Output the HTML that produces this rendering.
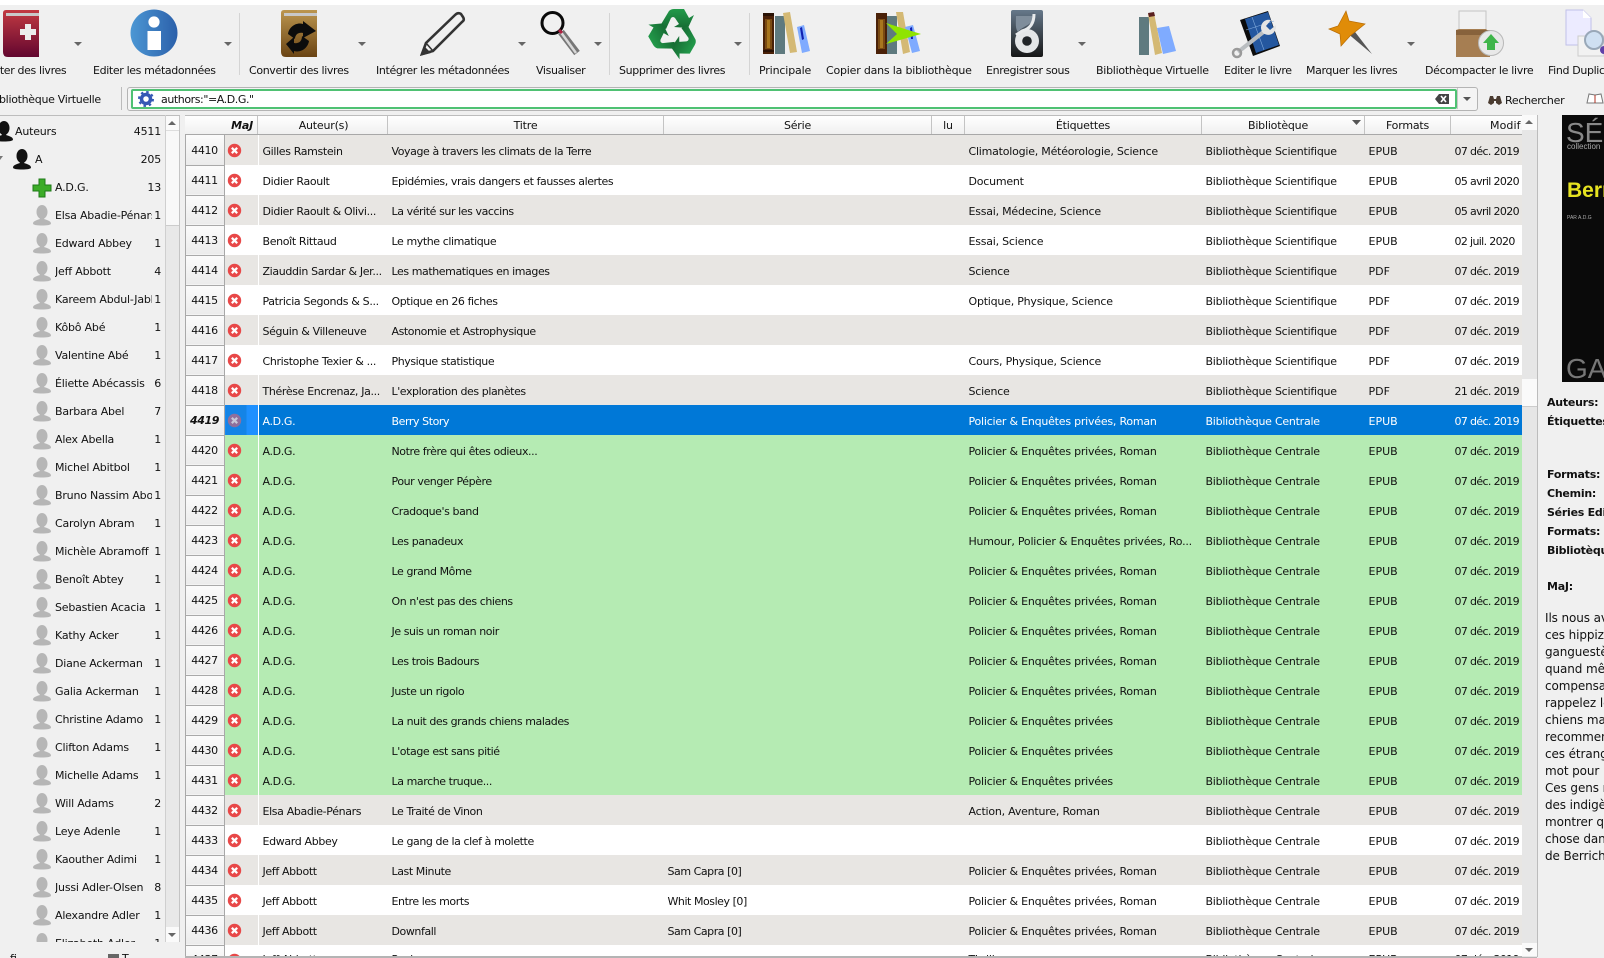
<!DOCTYPE html>
<html><head><meta charset="utf-8"><style>
html,body{margin:0;padding:0;width:1604px;height:958px;overflow:hidden;background:#f0f0f0}
body{font:11px/14px "DejaVu Sans","Liberation Sans",sans-serif;color:#111;position:relative}
.abs,.l,.sb,.dsc div,.pl{position:absolute;white-space:nowrap}
#top{position:absolute;left:0;top:0;width:1604px;height:5px;background:#fff}
.l{top:64px;color:#111;letter-spacing:-.36px}
#tb{position:absolute;left:0;top:0}
#sr{left:127px;top:87px;width:1349px;height:22px;border:1px solid #b4b4b4;border-radius:3px;background:#f4f4f4}
#in{left:131px;top:89px;width:1322px;height:16px;border:2px solid #4fc173;border-radius:2px;background:#fff}
#side{left:0;top:116px;width:165px;height:826px;overflow:hidden;letter-spacing:-.2px}
.sb{left:0;width:165px;height:28px;line-height:29px}
.sb b{font-weight:normal;position:absolute;right:4px}
.sb span{position:absolute;left:55px;width:97px;overflow:hidden}
.sb svg{position:absolute;left:32px;top:4px}
#hd{left:185px;top:115px;width:1337px;height:20px;border-top:1px solid #bdbdbd;border-bottom:1px solid #a8a8a8;box-sizing:border-box;background:linear-gradient(#fff,#f0f0f0);letter-spacing:-.2px}
.h{position:absolute;top:0;height:18px;line-height:20px;text-align:center;border-right:1px solid #c4c4c4;box-sizing:border-box;overflow:hidden}
#wrap{left:185px;top:135px;width:1337px;height:821px;overflow:hidden;background:#fff}
table{border-collapse:collapse;table-layout:fixed;width:1337px}
td,th{height:30px;padding:3px 0 0 3px;overflow:hidden;white-space:nowrap;font-weight:normal;text-align:left;box-sizing:border-box}
th{padding:2px 1px 0 0;text-align:center;background:linear-gradient(#fbfbfb,#ebebeb);border:1px solid #a9a9a9;border-top:0;color:#111;letter-spacing:-.4px}
td.m{padding:0 0 0 2px}
td:nth-child(3){letter-spacing:-.35px;padding-left:4px}
td:nth-child(4){letter-spacing:-.42px}
td:nth-child(5){letter-spacing:-.45px}
td:nth-child(7){letter-spacing:-.22px}
td:nth-child(8){letter-spacing:-.25px}
td.d{letter-spacing:-.65px}
.z td,.z th{padding-top:0}
.x{display:block;width:15px;height:15px}
.a td{background:#e8e6e3}.w td{background:#fff}.g td{background:#b5ebb3}
.s td{background:#0078d7;color:#fff}
.s td.m{background:linear-gradient(90deg,#1484e6 0,#1484e6 21px,#1e90ff 21px)}
.s th{font-weight:bold;font-style:italic}
.st{position:absolute;left:1522px;width:15px}
.dsc{position:absolute;left:1545px;top:1px;letter-spacing:-.1px;font-size:12px}
.pl{left:1547px;font-weight:bold;letter-spacing:-.25px}
</style></head><body>
<div id="top"></div>

<svg id="tb" width="1604" height="112" viewBox="0 0 1604 112">
<defs>
<linearGradient id="gr" x1="0" y1="0" x2="0" y2="1"><stop offset="0" stop-color="#c23a42"/><stop offset="1" stop-color="#62062f"/></linearGradient>
<linearGradient id="gb" x1="0" y1="0" x2="0" y2="1"><stop offset="0" stop-color="#bc964f"/><stop offset="1" stop-color="#6a4414"/></linearGradient>
<linearGradient id="gi" x1="0" y1="0" x2="1" y2="0"><stop offset="0" stop-color="#4c97d4"/><stop offset="1" stop-color="#2b60aa"/></linearGradient>
<linearGradient id="gg" x1="0" y1="0" x2="0" y2="1"><stop offset="0" stop-color="#229a4a"/><stop offset="1" stop-color="#166a33"/></linearGradient>
<linearGradient id="gd" x1="0" y1="0" x2="0" y2="1"><stop offset="0" stop-color="#66788a"/><stop offset="1" stop-color="#161616"/></linearGradient>
<g id="pc"><path d="M-14-7-5-22Q-3-24 0-24H10L15-15 20-18 14-5 0-6 5-9 1-15Q-1-17-3-15L-8-4Z"/></g>
</defs>
<!-- red book -->
<path d="M6 10H39V57H8Q3 57 3 52V13Q3 10 6 10Z" fill="url(#gr)"/><path d="M6 13H39V16H6Z" fill="#c9c9c9"/><path d="M25 24h6v5h5v6h-5v5h-6v-5h-5v-6h5z" fill="#ececec"/>
<circle cx="154" cy="33" r="23.5" fill="url(#gi)"/><circle cx="154" cy="22" r="5.6" fill="#fff"/><rect x="147.500" y="31" width="13.500" height="19" fill="#fff"/>
<!-- convert -->
<path d="M284 10H317V57H286Q281 57 281 52V13Q281 10 284 10Z" fill="url(#gb)"/><path d="M284 13H317V16H284Z" fill="#c8c8c8"/>
<path d="M288 34C289 27 296 22 303 24V21L316 31 303 38V33C298 32 295 35 295 39Z" fill="#0c0c0c"/><path d="M309 41C308 48 301 53 294 51V54L286 44 294 37V43C299 44 302 41 302 36Z" fill="#0c0c0c"/>
<!-- pencil -->
<path d="M422 54 426 43 455 15Q458 12 461 14L463 17Q465 20 462 22L433 51Z" fill="none" stroke="#333" stroke-width="2.600"/><path d="M420 56 424 46 431 53Z" fill="#333"/><path d="M426 43 433 51" stroke="#333" stroke-width="1.500"/>
<!-- magnifier -->
<path d="M561 32 577 53" stroke="#777" stroke-width="7"/><path d="M560 31 576 53" stroke="#d8d8d8" stroke-width="2.500"/><circle cx="552.500" cy="23" r="10.500" fill="none" stroke="#0a0a0a" stroke-width="3"/><path d="M559 30l3 3" stroke="#b02040" stroke-width="3"/>
<!-- recycle -->
<g fill="url(#gg)" transform="translate(674 33)"><use href="#pc"/><use href="#pc" transform="rotate(120)"/><use href="#pc" transform="rotate(240)"/></g>
<!-- separators -->
<g stroke="#d4d4d4"><path d="M239.500 13V75M609.500 13V75M749.500 13V75"/></g><path d="M121.500 87V110" stroke="#bbb"/>
<!-- arrows -->
<g fill="#666"><path d="M74 42h8l-4 4zM224 42h8l-4 4zM358 42h8l-4 4zM518 42h8l-4 4zM594 42h8l-4 4zM734 42h8l-4 4zM1078 42h8l-4 4zM1407 42h8l-4 4z"/></g>
<!-- books 1 -->
<rect x="763" y="13" width="11" height="41" fill="#4a2108"/><rect x="765" y="19" width="7" height="30" fill="#7a4a12"/><path d="M767 20h3v28h-3z" fill="#a8761e"/><rect x="763" y="13" width="11" height="3" fill="#2a1205"/><rect x="763" y="50" width="11" height="2" fill="#2a1205"/>
<rect x="775" y="16" width="10" height="38" fill="#5f7a7f"/><path d="M783 13 790 12 797 52 790 53Z" fill="#d4b974"/><path d="M797 27 804 25 810 51 802 53Z" fill="#7fabff"/><path d="M800 28 802 27 804 39 802 40Z" fill="#1020b0"/>
<!-- copy -->
<rect x="876" y="13" width="11" height="41" fill="#4a2108"/><rect x="878" y="19" width="7" height="30" fill="#7a4a12"/><path d="M880 20h3v28h-3z" fill="#a8761e"/>
<rect x="887" y="16" width="10" height="38" fill="#5f7a7f"/><path d="M896 12 903 12 910 52 903 54Z" fill="#d4b974"/><path d="M905 27 913 25 920 51 912 53Z" fill="#7fabff"/><path d="M910 28 912 27 913 39 911 39Z" fill="#1020b0"/>
<path d="M886 23 921 34 886 44 897 34Z" fill="#8fe400"/>
<!-- disk -->
<rect x="1011" y="10" width="32" height="47" rx="2" fill="url(#gd)"/><path d="M1016 16H1034C1034 25 1022 26 1018 32 1015 28 1016 24 1016 16Z" fill="#7f8d9b"/><circle cx="1027" cy="41" r="12" fill="#e4e6e8"/><path d="M1034 14Q1034 28 1022 31L1016 35" stroke="#e8eaec" stroke-width="3" fill="none"/><circle cx="1027" cy="41" r="4.800" fill="#202428"/>
<!-- virtual -->
<rect x="1139" y="17" width="10" height="38" fill="#5f7a7f"/><path d="M1148 14 1154 13 1162 53 1155 55Z" fill="#d4b974"/><path d="M1148 13 1154 12 1155 16 1149 17Z" fill="#5a2020"/><path d="M1157 28 1169 26 1176 51 1163 54Z" fill="#7fabff"/>
<!-- edit book -->
<path d="M1240 20 1268 11 1280 46 1253 56Z" fill="#0c0c0c"/><path d="M1245 19 1268 12 1279 45 1256 53Z" fill="#24579f"/><path d="M1252 17 1264 50M1246 30 1274 21" stroke="#7fa8da" stroke-width=".6"/>
<path d="M1238 52 1266 30" stroke="#b9bdc0" stroke-width="4"/><circle cx="1237" cy="53" r="4" fill="none" stroke="#9a9a9a" stroke-width="2.500"/><path d="M1263 33C1258 27 1263 18 1271 20L1266 26 1270 30 1276 25C1277 32 1270 38 1263 33Z" fill="#e4e4e4"/>
<!-- pin -->
<path d="M1346 32 1372 54 1352 28Z" fill="#555"/><path d="M1329 29 1338 26 1346 11 1349 21 1365 24 1350 36 1341 46 1340 34Z" fill="#e08c08" stroke="#b86c04" stroke-width=".7"/>
<!-- box -->
<rect x="1459" y="11" width="27" height="22" fill="#f1f1f1" stroke="#c4c4c4"/><path d="M1456 30 1459 29H1486L1490 33V57H1456Z" fill="#a67e52"/><rect x="1456" y="30" width="34" height="5" fill="#87623c"/>
<circle cx="1491" cy="43" r="12.500" fill="#e8e8e8" stroke="#b8b8b8"/><path d="M1491 34 1499 43H1495V50H1487V43H1483Z" fill="#3fb54a"/>
<!-- find duplicate -->
<path d="M1566 10H1583L1591 18V45H1566Z" fill="#ecebff" stroke="#c0c0e8"/><path d="M1583 10V18H1591Z" fill="#fff"/><rect x="1578" y="36" width="26" height="20" fill="#f2f2f2" stroke="#ccc"/><circle cx="1594" cy="40" r="9" fill="#cfe0f2" stroke="#99a8b8" stroke-width="2"/><circle cx="1604" cy="50" r="4" fill="#6040a8"/>
</svg>

<div class="l" style="left:-23px">Ajouter des livres</div>
<div class="l" style="left:93px">Editer les métadonnées</div>
<div class="l" style="left:249px">Convertir des livres</div>
<div class="l" style="left:376px">Intégrer les métadonnées</div>
<div class="l" style="left:536px">Visualiser</div>
<div class="l" style="left:619px">Supprimer des livres</div>
<div class="l" style="left:759px;letter-spacing:-.15px">Principale</div>
<div class="l" style="left:826px;letter-spacing:-.2px">Copier dans la bibliothèque</div>
<div class="l" style="left:986px">Enregistrer sous</div>
<div class="l" style="left:1096px;letter-spacing:-.26px">Bibliothèque Virtuelle</div>
<div class="l" style="left:1224px">Editer le livre</div>
<div class="l" style="left:1306px">Marquer les livres</div>
<div class="l" style="left:1425px;letter-spacing:-.31px">Décompacter le livre</div>
<div class="l" style="left:1548px">Find Duplicates</div>

<div class="abs" style="left:-11px;top:93px;letter-spacing:-.3px">Bibliothèque Virtuelle</div>
<div class="abs" id="sr"></div>
<div class="abs" id="in"></div>
<div class="abs" style="left:161px;top:93px;letter-spacing:-.42px">authors:"=A.D.G."</div>
<svg class="abs" style="left:138px;top:91px" width="16" height="16" viewBox="0 0 16 16"><circle cx="8" cy="8" r="4.500" fill="none" stroke="#3558b4" stroke-width="3.500"/><circle cx="8" cy="8" r="7" fill="none" stroke="#3558b4" stroke-width="2" stroke-dasharray="2.500 3"/></svg>
<svg class="abs" style="left:1434px;top:93px" width="16" height="12" viewBox="0 0 16 12"><path d="M5 1H15V11H5L1 6Z" fill="#444"/><path d="M7 3l5 6M12 3l-5 6" stroke="#fff" stroke-width="1.600"/></svg>
<svg class="abs" style="left:1457px;top:88px" width="20" height="21"><path d="M.5 0V21" stroke="#c8c8c8"/><path d="M6 9h8l-4 4z" fill="#555"/></svg>
<svg class="abs" style="left:1487px;top:93px" width="16" height="14" viewBox="0 0 16 14"><path d="M1 10 3 3H6L7 6H9L10 3H13L15 10 12 12 9 10V8H7V10L4 12Z" fill="#4a3b30"/></svg>
<div class="abs" style="left:1505px;top:94px;letter-spacing:-.3px">Rechercher</div>
<svg class="abs" style="left:1586px;top:92px" width="18" height="13" viewBox="0 0 18 13"><path d="M1 11 3 2 9 3 15 2 17 11 9 11Z" fill="#fff" stroke="#777"/><path d="M9 3V11" stroke="#b03020"/></svg>

<!-- sidebar -->
<div class="abs" style="left:0;top:115px;width:180px;height:1px;background:#bdbdbd"></div>
<div class="abs" style="left:165px;top:116px;width:14px;height:826px;background:#e8e8e8;border-right:1px solid #c4c4c4"></div>
<div class="abs" style="left:165px;top:116px;width:14px;height:14px;background:#fafafa"></div>
<div class="abs" style="left:165px;top:130px;width:14px;height:94px;background:#f8f8f8;border-bottom:1px solid #ccc;border-top:1px solid #ddd"></div>
<div class="abs" style="left:165px;top:927px;width:14px;height:15px;background:#fafafa"></div>
<svg class="abs" style="left:165px;top:116px" width="14" height="826"><path d="M3 9h8L7 5zM3 817h8l-4 4z" fill="#666"/></svg>
<div class="abs" style="left:165px;top:115px;width:1px;height:827px;background:#cfcfcf"></div>

<svg width="0" height="0" style="position:absolute"><defs>
<g id="p"><ellipse cx="10" cy="7" rx="5.500" ry="7"/><path d="M7 12 8 14C5 15 1 16 1 18.500 1 20 5 20.500 10 20.500S19 20 19 18.500C19 16 15 15 12 14L13 12Z"/></g>
<g id="x"><circle cx="7.500" cy="7.500" r="6.700" fill="#e84848"/><path d="M4.800 4.800l5.400 5.400M10.200 4.800l-5.400 5.400" stroke="#fff" stroke-width="2.200"/></g>
<g id="y"><circle cx="7.500" cy="7.500" r="6.700" fill="#8f6f9c"/><path d="M4.800 4.800l5.400 5.400M10.200 4.800l-5.400 5.400" stroke="#c8c8d8" stroke-width="2.200"/></g>
</defs></svg>

<div class="abs" id="side">
<div class="sb" style="top:1px"><svg style="left:-6px" width="20" height="21" fill="#111"><use href="#p"/></svg><span style="left:15px">Auteurs</span><b>4511</b></div>
<div class="sb" style="top:29px"><svg style="left:12px" width="20" height="21" fill="#111"><use href="#p"/></svg><span style="left:35px">A</span><b>205</b></div>
<div class="sb" style="top:57px"><svg width="20" height="21" viewBox="0 0 20 21"><path d="M7 2h6v6h6v6h-6v6H7v-6H1V8h6z" fill="#3cac28" stroke="#1e7a18"/></svg><span>A.D.G.</span><b>13</b></div>
<div class="sb" style="top:85px"><svg width="20" height="21" fill="#b6b6b6"><use href="#p"/></svg><span>Elsa Abadie-Pénars</span><b>1</b></div>
<div class="sb" style="top:113px"><svg width="20" height="21" fill="#b6b6b6"><use href="#p"/></svg><span>Edward Abbey</span><b>1</b></div>
<div class="sb" style="top:141px"><svg width="20" height="21" fill="#b6b6b6"><use href="#p"/></svg><span>Jeff Abbott</span><b>4</b></div>
<div class="sb" style="top:169px"><svg width="20" height="21" fill="#b6b6b6"><use href="#p"/></svg><span>Kareem Abdul-Jabbar</span><b>1</b></div>
<div class="sb" style="top:197px"><svg width="20" height="21" fill="#b6b6b6"><use href="#p"/></svg><span>Kôbô Abé</span><b>1</b></div>
<div class="sb" style="top:225px"><svg width="20" height="21" fill="#b6b6b6"><use href="#p"/></svg><span>Valentine Abé</span><b>1</b></div>
<div class="sb" style="top:253px"><svg width="20" height="21" fill="#b6b6b6"><use href="#p"/></svg><span>Éliette Abécassis</span><b>6</b></div>
<div class="sb" style="top:281px"><svg width="20" height="21" fill="#b6b6b6"><use href="#p"/></svg><span>Barbara Abel</span><b>7</b></div>
<div class="sb" style="top:309px"><svg width="20" height="21" fill="#b6b6b6"><use href="#p"/></svg><span>Alex Abella</span><b>1</b></div>
<div class="sb" style="top:337px"><svg width="20" height="21" fill="#b6b6b6"><use href="#p"/></svg><span>Michel Abitbol</span><b>1</b></div>
<div class="sb" style="top:365px"><svg width="20" height="21" fill="#b6b6b6"><use href="#p"/></svg><span>Bruno Nassim Aboudrar</span><b>1</b></div>
<div class="sb" style="top:393px"><svg width="20" height="21" fill="#b6b6b6"><use href="#p"/></svg><span>Carolyn Abram</span><b>1</b></div>
<div class="sb" style="top:421px"><svg width="20" height="21" fill="#b6b6b6"><use href="#p"/></svg><span>Michèle Abramoff</span><b>1</b></div>
<div class="sb" style="top:449px"><svg width="20" height="21" fill="#b6b6b6"><use href="#p"/></svg><span>Benoît Abtey</span><b>1</b></div>
<div class="sb" style="top:477px"><svg width="20" height="21" fill="#b6b6b6"><use href="#p"/></svg><span>Sebastien Acacia</span><b>1</b></div>
<div class="sb" style="top:505px"><svg width="20" height="21" fill="#b6b6b6"><use href="#p"/></svg><span>Kathy Acker</span><b>1</b></div>
<div class="sb" style="top:533px"><svg width="20" height="21" fill="#b6b6b6"><use href="#p"/></svg><span>Diane Ackerman</span><b>1</b></div>
<div class="sb" style="top:561px"><svg width="20" height="21" fill="#b6b6b6"><use href="#p"/></svg><span>Galia Ackerman</span><b>1</b></div>
<div class="sb" style="top:589px"><svg width="20" height="21" fill="#b6b6b6"><use href="#p"/></svg><span>Christine Adamo</span><b>1</b></div>
<div class="sb" style="top:617px"><svg width="20" height="21" fill="#b6b6b6"><use href="#p"/></svg><span>Clifton Adams</span><b>1</b></div>
<div class="sb" style="top:645px"><svg width="20" height="21" fill="#b6b6b6"><use href="#p"/></svg><span>Michelle Adams</span><b>1</b></div>
<div class="sb" style="top:673px"><svg width="20" height="21" fill="#b6b6b6"><use href="#p"/></svg><span>Will Adams</span><b>2</b></div>
<div class="sb" style="top:701px"><svg width="20" height="21" fill="#b6b6b6"><use href="#p"/></svg><span>Leye Adenle</span><b>1</b></div>
<div class="sb" style="top:729px"><svg width="20" height="21" fill="#b6b6b6"><use href="#p"/></svg><span>Kaouther Adimi</span><b>1</b></div>
<div class="sb" style="top:757px"><svg width="20" height="21" fill="#b6b6b6"><use href="#p"/></svg><span>Jussi Adler-Olsen</span><b>8</b></div>
<div class="sb" style="top:785px"><svg width="20" height="21" fill="#b6b6b6"><use href="#p"/></svg><span>Alexandre Adler</span><b>1</b></div>
<div class="sb" style="top:813px"><svg width="20" height="21" fill="#b6b6b6"><use href="#p"/></svg><span>Elizabeth Adler</span><b>1</b></div>
</div>
<svg class="abs" style="left:0;top:154px" width="4" height="8"><path d="M0 2h3L0 6z" fill="#777"/></svg>
<div class="abs" style="left:10px;top:952px">fi</div>
<div class="abs" style="left:122px;top:952px">T</div>
<div class="abs" style="left:108px;top:954px;width:11px;height:4px;background:#666"></div>

<!-- table header -->
<div class="abs" id="hd">
<div class="h" style="left:0;width:39px;border:0"></div>
<div class="h" style="left:39px;width:34px;font-weight:bold;font-style:italic;text-align:right;padding-right:4px">MaJ</div>
<div class="h" style="left:73px;width:130px;padding-left:2px">Auteur(s)</div>
<div class="h" style="left:203px;width:276px">Titre</div>
<div class="h" style="left:479px;width:268px">Série</div>
<div class="h" style="left:747px;width:33px">lu</div>
<div class="h" style="left:780px;width:237px">Étiquettes</div>
<div class="h" style="left:1017px;width:163px;padding-right:10px">Bibliotèque</div>
<div class="h" style="left:1180px;width:86px">Formats</div>
<div class="h" style="left:1266px;width:71px;text-align:left;padding-left:39px;border:0;letter-spacing:.1px">Modif</div>
</div>
<svg class="abs" style="left:1352px;top:120px" width="10" height="6"><path d="M0 0h9l-4.500 5z" fill="#555"/></svg>

<div class="abs" id="wrap"><table>
<colgroup><col style="width:39px"><col style="width:34px"><col style="width:130px"><col style="width:276px"><col style="width:268px"><col style="width:33px"><col style="width:237px"><col style="width:163px"><col style="width:86px"><col style="width:71px"></colgroup>
<tr class="a"><th>4410<td class="m"><svg class="x"><use href="#x"/></svg><td>Gilles Ramstein<td>Voyage à travers les climats de la Terre<td><td><td>Climatologie, Météorologie, Science<td>Bibliothèque Scientifique<td>EPUB<td class="d">07 déc. 2019
<tr class="w"><th>4411<td class="m"><svg class="x"><use href="#x"/></svg><td>Didier Raoult<td>Epidémies, vrais dangers et fausses alertes<td><td><td>Document<td>Bibliothèque Scientifique<td>EPUB<td class="d">05 avril 2020
<tr class="a"><th>4412<td class="m"><svg class="x"><use href="#x"/></svg><td>Didier Raoult &amp; Olivi...<td>La vérité sur les vaccins<td><td><td>Essai, Médecine, Science<td>Bibliothèque Scientifique<td>EPUB<td class="d">05 avril 2020
<tr class="w"><th>4413<td class="m"><svg class="x"><use href="#x"/></svg><td>Benoît Rittaud<td>Le mythe climatique<td><td><td>Essai, Science<td>Bibliothèque Scientifique<td>EPUB<td class="d">02 juil. 2020
<tr class="a"><th>4414<td class="m"><svg class="x"><use href="#x"/></svg><td>Ziauddin Sardar &amp; Jer...<td>Les mathematiques en images<td><td><td>Science<td>Bibliothèque Scientifique<td>PDF<td class="d">07 déc. 2019
<tr class="w"><th>4415<td class="m"><svg class="x"><use href="#x"/></svg><td>Patricia Segonds &amp; S...<td>Optique en 26 fiches<td><td><td>Optique, Physique, Science<td>Bibliothèque Scientifique<td>PDF<td class="d">07 déc. 2019
<tr class="a"><th>4416<td class="m"><svg class="x"><use href="#x"/></svg><td>Séguin &amp; Villeneuve<td>Astonomie et Astrophysique<td><td><td><td>Bibliothèque Scientifique<td>PDF<td class="d">07 déc. 2019
<tr class="w"><th>4417<td class="m"><svg class="x"><use href="#x"/></svg><td>Christophe Texier &amp; ...<td>Physique statistique<td><td><td>Cours, Physique, Science<td>Bibliothèque Scientifique<td>PDF<td class="d">07 déc. 2019
<tr class="a"><th>4418<td class="m"><svg class="x"><use href="#x"/></svg><td>Thérèse Encrenaz, Ja...<td>L'exploration des planètes<td><td><td>Science<td>Bibliothèque Scientifique<td>PDF<td class="d">21 déc. 2019
<tr class="s"><th>4419<td class="m"><svg class="x"><use href="#y"/></svg><td>A.D.G.<td>Berry Story<td><td><td>Policier &amp; Enquêtes privées, Roman<td>Bibliothèque Centrale<td>EPUB<td class="d">07 déc. 2019
<tr class="g"><th>4420<td class="m"><svg class="x"><use href="#x"/></svg><td>A.D.G.<td>Notre frère qui êtes odieux...<td><td><td>Policier &amp; Enquêtes privées, Roman<td>Bibliothèque Centrale<td>EPUB<td class="d">07 déc. 2019
<tr class="g"><th>4421<td class="m"><svg class="x"><use href="#x"/></svg><td>A.D.G.<td>Pour venger Pépère<td><td><td>Policier &amp; Enquêtes privées, Roman<td>Bibliothèque Centrale<td>EPUB<td class="d">07 déc. 2019
<tr class="g"><th>4422<td class="m"><svg class="x"><use href="#x"/></svg><td>A.D.G.<td>Cradoque's band<td><td><td>Policier &amp; Enquêtes privées, Roman<td>Bibliothèque Centrale<td>EPUB<td class="d">07 déc. 2019
<tr class="g"><th>4423<td class="m"><svg class="x"><use href="#x"/></svg><td>A.D.G.<td>Les panadeux<td><td><td>Humour, Policier &amp; Enquêtes privées, Ro...<td>Bibliothèque Centrale<td>EPUB<td class="d">07 déc. 2019
<tr class="g"><th>4424<td class="m"><svg class="x"><use href="#x"/></svg><td>A.D.G.<td>Le grand Môme<td><td><td>Policier &amp; Enquêtes privées, Roman<td>Bibliothèque Centrale<td>EPUB<td class="d">07 déc. 2019
<tr class="g"><th>4425<td class="m"><svg class="x"><use href="#x"/></svg><td>A.D.G.<td>On n'est pas des chiens<td><td><td>Policier &amp; Enquêtes privées, Roman<td>Bibliothèque Centrale<td>EPUB<td class="d">07 déc. 2019
<tr class="g"><th>4426<td class="m"><svg class="x"><use href="#x"/></svg><td>A.D.G.<td>Je suis un roman noir<td><td><td>Policier &amp; Enquêtes privées, Roman<td>Bibliothèque Centrale<td>EPUB<td class="d">07 déc. 2019
<tr class="g"><th>4427<td class="m"><svg class="x"><use href="#x"/></svg><td>A.D.G.<td>Les trois Badours<td><td><td>Policier &amp; Enquêtes privées, Roman<td>Bibliothèque Centrale<td>EPUB<td class="d">07 déc. 2019
<tr class="g"><th>4428<td class="m"><svg class="x"><use href="#x"/></svg><td>A.D.G.<td>Juste un rigolo<td><td><td>Policier &amp; Enquêtes privées, Roman<td>Bibliothèque Centrale<td>EPUB<td class="d">07 déc. 2019
<tr class="g"><th>4429<td class="m"><svg class="x"><use href="#x"/></svg><td>A.D.G.<td>La nuit des grands chiens malades<td><td><td>Policier &amp; Enquêtes privées<td>Bibliothèque Centrale<td>EPUB<td class="d">07 déc. 2019
<tr class="g"><th>4430<td class="m"><svg class="x"><use href="#x"/></svg><td>A.D.G.<td>L'otage est sans pitié<td><td><td>Policier &amp; Enquêtes privées<td>Bibliothèque Centrale<td>EPUB<td class="d">07 déc. 2019
<tr class="g"><th>4431<td class="m"><svg class="x"><use href="#x"/></svg><td>A.D.G.<td>La marche truque...<td><td><td>Policier &amp; Enquêtes privées<td>Bibliothèque Centrale<td>EPUB<td class="d">07 déc. 2019
<tr class="a"><th>4432<td class="m"><svg class="x"><use href="#x"/></svg><td>Elsa Abadie-Pénars<td>Le Traité de Vinon<td><td><td>Action, Aventure, Roman<td>Bibliothèque Centrale<td>EPUB<td class="d">07 déc. 2019
<tr class="w"><th>4433<td class="m"><svg class="x"><use href="#x"/></svg><td>Edward Abbey<td>Le gang de la clef à molette<td><td><td><td>Bibliothèque Centrale<td>EPUB<td class="d">07 déc. 2019
<tr class="a"><th>4434<td class="m"><svg class="x"><use href="#x"/></svg><td>Jeff Abbott<td>Last Minute<td>Sam Capra [0]<td><td>Policier &amp; Enquêtes privées, Roman<td>Bibliothèque Centrale<td>EPUB<td class="d">07 déc. 2019
<tr class="w"><th>4435<td class="m"><svg class="x"><use href="#x"/></svg><td>Jeff Abbott<td>Entre les morts<td>Whit Mosley [0]<td><td>Policier &amp; Enquêtes privées, Roman<td>Bibliothèque Centrale<td>EPUB<td class="d">07 déc. 2019
<tr class="a"><th>4436<td class="m"><svg class="x"><use href="#x"/></svg><td>Jeff Abbott<td>Downfall<td>Sam Capra [0]<td><td>Policier &amp; Enquêtes privées, Roman<td>Bibliothèque Centrale<td>EPUB<td class="d">07 déc. 2019
<tr class="w z"><th>4437<td class="m"><svg class="x"><use href="#x"/></svg><td>Jeff Abbott<td>Panique<td><td><td>Thriller<td>Bibliothèque Centrale<td>EPUB<td class="d">07 déc. 2019
</table></div>
<div class="abs" style="left:185px;top:956px;width:1352px;height:2px;background:#b4b4b4"></div>

<!-- main scrollbar -->
<div class="st" style="top:115px;height:842px;background:#e6e6e6;border-right:1px solid #bcbcbc"></div>
<div class="st" style="top:115px;height:15px;background:#fafafa"></div>
<div class="st" style="top:379px;height:27px;background:#fafafa;border-bottom:1px solid #ccc"></div>
<div class="st" style="top:943px;height:13px;background:#fafafa"></div>
<svg class="abs" style="left:1522px;top:115px" width="15" height="842"><path d="M3 9h8L7 5zM3 833h8l-4 4z" fill="#666"/></svg>

<!-- cover -->
<div class="abs" style="left:1562px;top:115px;width:42px;height:267px;background:#0a0a0a;overflow:hidden">
<div class="abs" style="left:4px;top:3px;font:28px/30px 'Liberation Sans',sans-serif;color:#888">SÉR</div>
<div class="abs" style="left:5px;top:27px;font:8px/10px 'Liberation Sans',sans-serif;color:#aaa">collection</div>
<div class="abs" style="left:5px;top:64px;font:bold 21px/24px 'Liberation Sans',sans-serif;color:#e6e320">Berry</div>
<div class="abs" style="left:5px;top:100px;font:5px/6px 'Liberation Sans',sans-serif;color:#aaa">PAR A.D.G</div>
<div class="abs" style="left:4px;top:240px;font:28px/28px 'Liberation Sans',sans-serif;color:#777">GAL</div>
</div>

<!-- details -->
<div class="pl" style="top:396px">Auteurs:</div>
<div class="pl" style="top:415px">Étiquettes:</div>
<div class="pl" style="top:468px">Formats:</div>
<div class="pl" style="top:487px">Chemin:</div>
<div class="pl" style="top:506px">Séries Edition:</div>
<div class="pl" style="top:525px">Formats:</div>
<div class="pl" style="top:544px">Bibliotèque:</div>
<div class="pl" style="top:580px">MaJ:</div>
<div class="dsc">
<div style="top:610px">Ils nous avaient</div>
<div style="top:627px">ces hippizzzz</div>
<div style="top:644px">ganguestères</div>
<div style="top:661px">quand même</div>
<div style="top:678px">compensation</div>
<div style="top:695px">rappelez les</div>
<div style="top:712px">chiens malades</div>
<div style="top:729px">recommençant</div>
<div style="top:746px">ces étranges</div>
<div style="top:763px">mot pour mot</div>
<div style="top:780px">Ces gens ne</div>
<div style="top:797px">des indigènes</div>
<div style="top:814px">montrer que</div>
<div style="top:831px">chose dans</div>
<div style="top:848px">de Berrichons</div>
</div>
</body></html>
